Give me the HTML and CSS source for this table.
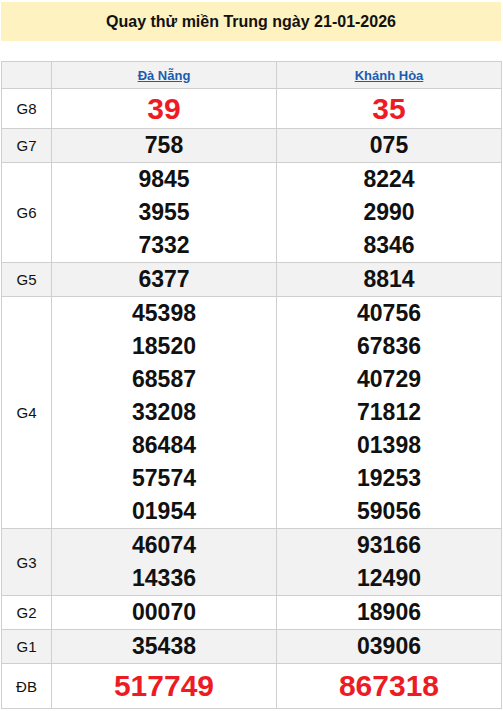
FILE: index.html
```html
<!DOCTYPE html>
<html lang="vi">
<head>
<meta charset="utf-8">
<link rel="stylesheet" href="styles.css">
</head>
<body>
<div class="page">
  <h2 class="title">Quay thử miền Trung ngày 21-01-2026</h2>
  <table class="kq">
    <colgroup><col class="c-lbl"><col class="c-prov"><col class="c-prov"></colgroup>
    <tr class="head">
      <th></th>
      <th><a href="#">Đà Nẵng</a></th>
      <th><a href="#">Khánh Hòa</a></th>
    </tr>
    <tr class="g8">
      <td class="lbl">G8</td>
      <td><div class="n big red">39</div></td>
      <td><div class="n big red">35</div></td>
    </tr>
    <tr class="alt">
      <td class="lbl">G7</td>
      <td><div class="n">758</div></td>
      <td><div class="n">075</div></td>
    </tr>
    <tr>
      <td class="lbl">G6</td>
      <td><div class="n">9845</div><div class="n">3955</div><div class="n">7332</div></td>
      <td><div class="n">8224</div><div class="n">2990</div><div class="n">8346</div></td>
    </tr>
    <tr class="alt">
      <td class="lbl">G5</td>
      <td><div class="n">6377</div></td>
      <td><div class="n">8814</div></td>
    </tr>
    <tr>
      <td class="lbl">G4</td>
      <td><div class="n">45398</div><div class="n">18520</div><div class="n">68587</div><div class="n">33208</div><div class="n">86484</div><div class="n">57574</div><div class="n">01954</div></td>
      <td><div class="n">40756</div><div class="n">67836</div><div class="n">40729</div><div class="n">71812</div><div class="n">01398</div><div class="n">19253</div><div class="n">59056</div></td>
    </tr>
    <tr class="alt">
      <td class="lbl">G3</td>
      <td><div class="n">46074</div><div class="n">14336</div></td>
      <td><div class="n">93166</div><div class="n">12490</div></td>
    </tr>
    <tr>
      <td class="lbl">G2</td>
      <td><div class="n">00070</div></td>
      <td><div class="n">18906</div></td>
    </tr>
    <tr class="alt">
      <td class="lbl">G1</td>
      <td><div class="n">35438</div></td>
      <td><div class="n">03906</div></td>
    </tr>
    <tr class="db">
      <td class="lbl">ĐB</td>
      <td><div class="n big red">517749</div></td>
      <td><div class="n big red">867318</div></td>
    </tr>
  </table>
</div>
</body>
</html>
```

FILE: styles.css
```css
html, body {
  margin: 0;
  padding: 0;
  background: #fff;
}
body {
  font-family: "Liberation Sans", Arial, sans-serif;
  color: #000;
}
.page {
  padding: 2px 2px 0 1px;
}
.title {
  margin: 0;
  height: 39px;
  line-height: 39px;
  background: #fdf2c0;
  text-align: center;
  font-size: 16px;
  font-weight: bold;
  color: #111;
}
.kq {
  margin-top: 20px;
  width: 500px;
  border-collapse: collapse;
  table-layout: fixed;
}
.c-lbl { width: 50px; }
.c-prov { width: 225px; }
.kq th, .kq td {
  border: 1px solid #cfcfcf;
  padding: 0;
  text-align: center;
  vertical-align: middle;
}
.kq .head th {
  background: #f2f2f2;
  height: 26px;
  font-size: 13px;
  font-weight: bold;
}
.kq .head a {
  color: #1a5cb0;
  text-decoration: underline;
}
.kq tr.alt td {
  background: #f2f2f2;
}
.lbl {
  font-size: 15px;
  color: #111;
}
.n {
  font-size: 23px;
  font-weight: bold;
  line-height: 33px;
  color: #111;
}
.n.big {
  font-size: 30px;
}
.g8 .n { line-height: 39px; }
.db .n { line-height: 44px; }
.red { color: #ed1c24; }
```
